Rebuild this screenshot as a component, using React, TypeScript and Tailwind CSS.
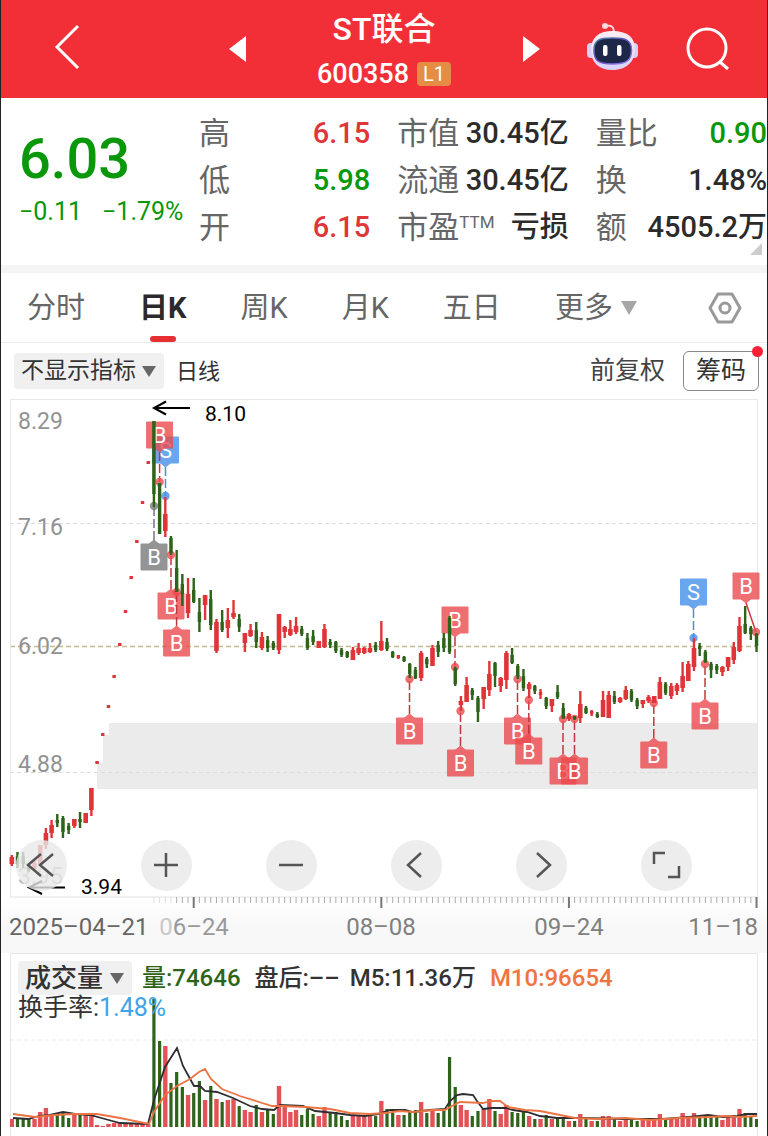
import type { ReactNode } from "react";

// [direction, high, low, body top, body bottom, volume]
type Candle = [1 | 0, number, number, number, number, number];

const CANDLES: Candle[] = [
  [1, 855, 866, 857, 864, 8], [0, 852, 868, 856, 864, 9], [0, 852, 868, 856, 864, 9], [0, 863, 872, 864, 870, 8],
  [1, 861, 871, 863, 869, 8], [1, 845, 866, 845, 864, 15], [1, 828, 849, 833, 845, 19], [1, 820, 838, 825, 833, 13],
  [0, 814, 827, 820, 823, 14], [0, 816, 838, 818, 832, 14], [0, 823, 834, 826, 830, 9], [1, 819, 828, 819, 826, 12],
  [0, 812, 828, 819, 822, 12], [1, 813, 823, 813, 823, 13], [1, 788, 816, 788, 810, 12], [1, 761, 764, 761, 764, 2],
  [1, 733, 736, 733, 736, 1], [1, 705, 708, 705, 708, 3], [1, 675, 678, 675, 678, 4], [1, 643, 646, 643, 646, 4],
  [1, 610, 613, 610, 613, 3], [1, 576, 579, 576, 579, 3], [1, 540, 543, 540, 543, 3], [1, 501, 504, 501, 504, 3],
  [1, 461, 464, 461, 464, 3], [0, 421, 507, 421, 494, 128], [0, 483, 534, 483, 534, 86], [1, 497, 537, 514, 531, 81],
  [0, 536, 555, 538, 553, 44], [0, 550, 592, 568, 592, 55], [0, 574, 606, 584, 594, 40], [1, 578, 618, 594, 613, 32],
  [0, 578, 603, 590, 602, 34], [0, 598, 632, 612, 622, 46], [1, 595, 620, 595, 605, 27], [0, 590, 630, 599, 625, 41],
  [1, 619, 653, 622, 651, 28], [0, 610, 632, 622, 630, 25], [1, 608, 638, 620, 628, 27], [1, 600, 619, 613, 617, 28],
  [0, 614, 632, 619, 627, 21], [1, 633, 652, 633, 643, 17], [1, 624, 637, 630, 636, 15], [0, 622, 648, 630, 642, 22],
  [1, 632, 650, 637, 648, 15], [0, 636, 652, 640, 648, 17], [0, 641, 650, 643, 648, 13], [1, 614, 654, 614, 650, 41],
  [1, 626, 638, 627, 632, 20], [1, 620, 636, 629, 635, 15], [1, 617, 634, 626, 632, 17], [0, 626, 636, 629, 634, 12],
  [0, 633, 650, 638, 648, 18], [0, 630, 645, 636, 642, 13], [1, 641, 648, 641, 648, 11], [1, 624, 648, 629, 647, 20],
  [0, 639, 648, 642, 645, 15], [0, 641, 653, 642, 651, 15], [0, 648, 657, 650, 655, 11], [0, 651, 658, 652, 657, 7],
  [1, 647, 660, 650, 660, 12], [1, 643, 655, 648, 653, 12], [1, 647, 654, 648, 653, 12], [1, 643, 653, 648, 652, 11],
  [0, 642, 652, 645, 650, 11], [1, 621, 651, 641, 650, 26], [0, 638, 651, 642, 649, 18], [0, 651, 658, 652, 657, 14],
  [1, 655, 659, 655, 658, 12], [0, 656, 662, 657, 661, 12], [0, 663, 678, 664, 674, 15], [0, 667, 679, 670, 678, 17],
  [1, 651, 681, 653, 678, 25], [0, 657, 668, 659, 664, 14], [1, 645, 666, 648, 666, 18], [0, 641, 657, 645, 652, 14],
  [0, 633, 652, 638, 648, 18], [0, 616, 654, 618, 652, 70], [0, 667, 686, 668, 684, 40], [1, 696, 711, 701, 705, 22],
  [1, 677, 702, 685, 702, 17], [0, 688, 700, 690, 695, 11], [0, 696, 722, 698, 712, 16], [1, 687, 709, 687, 699, 18],
  [1, 661, 696, 674, 690, 28], [0, 662, 687, 663, 676, 16], [1, 677, 692, 678, 686, 13], [1, 651, 689, 653, 680, 22],
  [0, 648, 664, 655, 663, 15], [0, 664, 679, 666, 676, 14], [0, 669, 691, 676, 688, 15], [1, 682, 698, 684, 689, 11],
  [0, 685, 694, 686, 691, 8], [1, 689, 699, 692, 695, 8], [0, 697, 709, 698, 706, 12], [1, 699, 712, 699, 706, 8],
  [0, 685, 699, 692, 697, 10], [0, 703, 719, 708, 718, 9], [1, 713, 721, 714, 719, 6], [0, 716, 720, 716, 719, 6],
  [1, 691, 723, 704, 718, 13], [0, 706, 714, 708, 713, 8], [1, 710, 716, 711, 714, 6], [0, 712, 718, 714, 717, 6],
  [1, 691, 717, 700, 717, 11], [1, 691, 718, 695, 718, 11], [0, 691, 704, 696, 702, 8], [1, 697, 703, 698, 702, 6],
  [1, 686, 700, 690, 699, 9], [0, 689, 702, 691, 700, 8], [0, 698, 709, 700, 706, 6], [1, 700, 708, 700, 704, 7],
  [1, 695, 703, 697, 701, 7], [1, 696, 703, 696, 703, 7], [1, 677, 699, 682, 699, 13], [0, 682, 695, 684, 693, 8],
  [1, 683, 699, 686, 696, 8], [1, 683, 695, 685, 691, 8], [1, 662, 692, 676, 688, 14], [1, 661, 681, 664, 681, 11],
  [1, 638, 671, 648, 667, 14], [0, 643, 656, 646, 649, 11], [0, 650, 663, 652, 662, 11], [0, 662, 678, 664, 670, 11],
  [0, 664, 674, 666, 670, 10], [1, 666, 676, 667, 672, 7], [1, 657, 671, 657, 667, 10], [1, 642, 664, 647, 660, 12],
  [1, 617, 652, 626, 651, 18], [0, 606, 634, 624, 633, 14], [0, 626, 640, 628, 634, 10], [0, 633, 652, 634, 646, 8],
];

const STEP = 5.685;
const cx = (i: number) => 11.8 + i * STEP;
const UP = "#e03538";
const DOWN = "#2d641a";

type Marker = {
  label: string;
  x: number;
  y: number;
  dotX: number;
  dotY: number;
  color: string;
  line: string;
  solid?: boolean;
};

const buy = (x: number, y: number, dotY: number): Marker => ({
  label: "B", x, y, dotX: x, dotY, color: "#ec4a4e", line: "#c0383f",
});

const MARKERS: Marker[] = [
  { label: "S", x: 165.5, y: 450, dotX: 165.5, dotY: 496, color: "#4490ea", line: "#4b8fd8" },
  buy(159.6, 435, 482),
  { label: "B", x: 154, y: 557, dotX: 154, dotY: 506, color: "#7a7a7a", line: "#777777" },
  buy(171, 606, 555),
  buy(176.6, 643, 592),
  buy(409.5, 731, 679),
  buy(455, 620, 667),
  buy(460.5, 763, 711),
  buy(517.5, 731, 679),
  buy(528.8, 751, 700),
  buy(563, 771, 719),
  buy(574.5, 771, 719),
  buy(653.8, 755, 703),
  buy(705, 716, 664),
  { label: "S", x: 693.5, y: 592, dotX: 693.5, dotY: 638, color: "#4490ea", line: "#4b8fd8" },
  { label: "B", x: 746, y: 586, dotX: 756, dotY: 632, color: "#ec4a4e", line: "#d0383f", solid: true },
];

const M5 =
  "13,1118 28,1119 40,1116 50,1115 63,1112 75,1114 90,1115 105,1119 120,1123 148,1124 154,1100 165,1067 177,1048 183,1066 194,1086 200,1086 205,1091 217,1092 233,1098 250,1106 262,1109 274,1110 280,1105 303,1106 315,1111 335,1113 350,1115 365,1116 378,1114 390,1110 405,1110 413,1112 430,1110 445,1109 450,1101 457,1095 463,1094 473,1095 477,1101 483,1109 492,1108 506,1108 513,1110 527,1112 540,1116 557,1118 580,1118 627,1119 663,1119 690,1117 708,1115 723,1117 737,1116 747,1114 757,1114";
const M10 =
  "13,1114 35,1117 55,1115 75,1114 97,1114 120,1118 149,1124 154,1112 165,1095 177,1086 190,1079 199,1072 205,1069 211,1079 222,1089 240,1096 272,1106 282,1106 305,1107 330,1109 350,1113 370,1114 385,1113 400,1111 413,1112 433,1110 445,1110 452,1106 460,1102 483,1103 491,1101 500,1101 508,1107 525,1110 540,1111 555,1114 575,1118 600,1119 625,1118 650,1120 680,1118 710,1117 725,1116 740,1117 757,1116";

const STATS = [
  [
    { label: "高", value: "6.15", cls: "text-[#e0363a]" },
    { label: "低", value: "5.98", cls: "text-[#0a970a]" },
    { label: "开", value: "6.15", cls: "text-[#e0363a]" },
  ],
  [
    { label: "市值", value: "30.45亿", cls: "text-[#2b2b2b]" },
    { label: "流通", value: "30.45亿", cls: "text-[#2b2b2b]" },
    { label: "市盈", sup: "TTM", value: "亏损", cls: "text-[#2b2b2b]" },
  ],
  [
    { label: "量比", value: "0.90", cls: "text-[#0a970a]" },
    { label: "换", value: "1.48%", cls: "text-[#2b2b2b]" },
    { label: "额", value: "4505.2万", cls: "text-[#2b2b2b]" },
  ],
];

const TABS = ["分时", "日K", "周K", "月K", "五日"];

function Robot() {
  return (
    <svg viewBox="0 0 52 50" className="h-[50px] w-[52px]">
      <defs>
        <linearGradient id="shell" x1="0" y1="0" x2="0" y2="1">
          <stop offset="0" stopColor="#fdeef4" />
          <stop offset="1" stopColor="#d9d2fb" />
        </linearGradient>
        <linearGradient id="rim" x1="0" y1="0" x2="1" y2="1">
          <stop offset="0" stopColor="#3f7f9c" />
          <stop offset="0.5" stopColor="#6a4fc4" />
          <stop offset="1" stopColor="#8d86f0" />
        </linearGradient>
      </defs>
      <path d="M19 4c6-1 8 1 8 7" fill="none" stroke="#f7d3d8" strokeWidth="2" />
      <circle cx="18" cy="4" r="3" fill="#fbd9de" />
      <rect x="0" y="21" width="8" height="15" rx="4" fill="#d8d0f5" />
      <rect x="43" y="21" width="8" height="15" rx="4" fill="#d8d0f5" />
      <path d="M25.500 9C40 9 48 15 48 27S40 48 25.500 48 4 40 4 28 11 9 25.500 9z" fill="url(#shell)" />
      <path
        d="M25.500 16C39 16 44.500 18 44.500 28.500S39 42 25.500 42 7 39 7 28.500 12 16 25.500 16z"
        fill="#1d2747"
        stroke="url(#rim)"
        strokeWidth="1.5"
      />
      <rect x="16" y="23" width="4.500" height="11" rx="2" fill="#fff" />
      <rect x="30" y="23" width="4.500" height="11" rx="2" fill="#fff" />
    </svg>
  );
}

function Header() {
  return (
    <header className="grid h-[98px] grid-cols-[1fr_277px_1fr] items-center bg-[#f22f37] text-white">
      <div className="flex items-center justify-between pl-[53px]">
        <button aria-label="返回" className="-mt-1">
          <svg viewBox="0 0 26 46" className="h-[46px] w-[26px]" fill="none" stroke="currentColor" strokeWidth="3">
            <path d="M24 2 3 23l21 21" />
          </svg>
        </button>
        <button aria-label="上一只">
          <svg viewBox="0 0 17 26" className="h-[26px] w-[17px]" fill="currentColor">
            <path d="M17 0v26L0 13z" />
          </svg>
        </button>
      </div>
      <div className="flex flex-col items-center gap-2">
        <h1 className="text-[32px] leading-[42px] font-medium">ST联合</h1>
        <div className="flex items-center gap-2 text-[27px] leading-8 font-medium">
          600358
          <span className="rounded-sm bg-[#e58d45] px-[6px] text-[20px] leading-6 font-normal">L1</span>
        </div>
      </div>
      <div className="flex items-center justify-between pr-[37px]">
        <button aria-label="下一只">
          <svg viewBox="0 0 17 26" className="h-[26px] w-[17px]" fill="currentColor">
            <path d="M0 0v26l17-13z" />
          </svg>
        </button>
        <button aria-label="助手" className="-mt-1">
          <Robot />
        </button>
        <button aria-label="搜索">
          <svg viewBox="0 0 44 44" className="size-11" fill="none" stroke="currentColor" strokeWidth="3">
            <circle cx="21" cy="21" r="19" />
            <path d="m34 35 8 7" />
          </svg>
        </button>
      </div>
    </header>
  );
}

function Quote() {
  return (
    <section className="relative grid grid-cols-[171px_1fr_1fr_1fr] gap-x-[27px] border-b-8 border-[#f4f4f4] pt-3 pb-[14px]">
      <div className="pl-[18px] text-[#0a970a]">
        <div className="pt-[18px] text-[56px] leading-[62px] font-medium">6.03</div>
        <div className="flex gap-5 pt-1 text-[25px] leading-9 whitespace-nowrap">
          <span>−0.11</span>
          <span>−1.79%</span>
        </div>
      </div>
      {STATS.map((col, i) => (
        <dl key={i} className="text-[31px] leading-[47px]">
          {col.map((s) => (
            <div key={s.label} className="flex justify-between whitespace-nowrap">
              <dt className="flex text-[#666]">
                {s.label}
                {"sup" in s && <span className="text-[17px] leading-9">{s.sup}</span>}
              </dt>
              <dd className={`text-[29px] font-medium ${s.cls}`}>{s.value}</dd>
            </div>
          ))}
        </dl>
      ))}
      <svg viewBox="0 0 12 12" className="absolute right-[5px] bottom-[10px] size-3" fill="#ccc">
        <path d="M12 0v12H0z" />
      </svg>
    </section>
  );
}

function Tabs() {
  return (
    <nav className="flex h-[70px] items-center border-b border-[#ececec] pr-[25px] pl-[26px] text-[29px] leading-[70px] text-[#666]">
      <div className="flex gap-[54px]">
        {TABS.map((t) =>
          t === "日K" ? (
            <button key={t} className="relative font-bold text-[#2a2a2a]">
              {t}
              <span className="absolute bottom-[1px] left-1/2 h-[6px] w-[26px] -translate-x-1/2 rounded-full bg-[#e62e33]" />
            </button>
          ) : (
            <button key={t}>{t}</button>
          ),
        )}
        <button className="flex items-center gap-2">
          更多
          <svg viewBox="0 0 16 14" className="h-[14px] w-4" fill="#a6a6a6">
            <path d="M0 0h16L8 14z" />
          </svg>
        </button>
      </div>
      <button aria-label="设置" className="ml-auto">
        <svg viewBox="0 0 34 32" className="h-8 w-[34px]" fill="none" stroke="#999" strokeWidth="3" strokeLinejoin="round">
          <path d="M10 2h14l8 14-8 14H10L2 16z" />
          <circle cx="17" cy="16" r="5" />
        </svg>
      </button>
    </nav>
  );
}

function Dropdown({ label, children, className }: { label: string; children: ReactNode; className: string }) {
  return (
    <div className={`flex items-center rounded bg-[#f0f0f0] pr-2 text-[#333] ${className}`}>
      <select aria-label={label} className="appearance-none bg-transparent pl-[7px] outline-none">
        {children}
      </select>
      <svg viewBox="0 0 14 11" className="ml-[6px] h-[11px] w-[14px]" fill="#666">
        <path d="M0 0h14L7 11z" />
      </svg>
    </div>
  );
}

function IndicatorBar() {
  return (
    <div className="flex h-14 items-center pr-2 pl-[13px] text-[#333]">
      <Dropdown label="指标" className="h-9 text-[23px]">
        <option>不显示指标</option>
      </Dropdown>
      <span className="ml-3 text-[22px]">日线</span>
      <button className="ml-auto text-[25px] text-[#444]">前复权</button>
      <button className="relative ml-[18px] h-10 rounded-md border border-[#888] px-3 text-[25px] leading-9">
        筹码
        <span className="absolute -top-[6px] -right-[5px] size-[11px] rounded-full bg-[#fa2038]" />
      </button>
    </div>
  );
}

function MarkerTag({ m }: { m: Marker }) {
  const dir = m.dotY > m.y ? 1 : -1;
  const edge = m.y + dir * 13;
  return (
    <g>
      <line
        x1={m.x}
        y1={edge + dir * 4}
        x2={m.dotX}
        y2={m.dotY}
        stroke={m.line}
        strokeWidth="1.5"
        strokeDasharray={m.solid ? undefined : "9 3"}
      />
      <circle cx={m.dotX} cy={m.dotY} r="4.2" fill={m.color} opacity="0.8" />
      <path
        d={`M${m.x - 13} ${m.y - 13}h26v26h-26zM${m.x - 5} ${edge}h10l-5 ${dir * 4}z`}
        fill={m.color}
        stroke={m.color}
        strokeLinejoin="round"
        opacity="0.8"
      />
      <text x={m.x} y={m.y + 8} textAnchor="middle" fontSize="22" fill="#fff">
        {m.label}
      </text>
    </g>
  );
}

function PriceChart() {
  return (
    <svg viewBox="10 399 748 554" className="block h-auto w-full overflow-visible" fill="none">
      <rect x="10" y="399" width="748" height="498" fill="#fff" />
      <path d="M97 789V763h6v-28h6v-12h649v66z" fill="#ebebeb" />
      <path d="M10 523.5h748M10 772.5h748" stroke="#dcdcdc" strokeDasharray="4 3" />
      <path d="M10 646.5h748" stroke="#c3b98f" strokeWidth="1.3" strokeDasharray="5 3" />
      <path d="M10.5 897V399.5h747V897" stroke="#e8e8e8" />
      <path d="M10 897h748" stroke="#e2e2e2" />

      <g fontSize="23" fill="#929292">
        <text x="18" y="429">8.29</text>
        <text x="18" y="535">7.16</text>
        <text x="18" y="654">6.02</text>
        <text x="18" y="772">4.88</text>
        <text x="18" y="884" fill="#b5b5b5">3.95</text>
      </g>

      {MARKERS.map((m, i) => (
        <MarkerTag key={i} m={m} />
      ))}

      {CANDLES.map(([up, high, low, top, bottom], i) => {
        const half = !up || bottom - top < 4 ? 1.7 : 2.3;
        return (
          <g key={i} fill={up ? UP : DOWN}>
            <rect x={cx(i) - 1.2} y={high} width="2.4" height={low - high} />
            <rect x={cx(i) - half} y={top} width={half * 2} height={bottom - top} />
          </g>
        );
      })}

      <g stroke="#000" strokeWidth="2">
        <path d="M166 401.500l-12 6.500 12 6.500M154 408h36" />
        <path d="M42 881l-13 6.500 13 6.500M29 887.500h36" />
      </g>
      <g fontSize="21" fill="#000">
        <text x="205" y="421">8.10</text>
        <text x="81" y="894">3.94</text>
      </g>

      {CANDLES.map((_, i) =>
        i < 25 ? null : (i - 32) % 33 === 0 ? (
          <path key={i} d={`M${cx(i)} 897v11`} stroke="#777" strokeWidth="2" />
        ) : (
          <path key={i} d={`M${cx(i)} 897v6`} stroke={i < 29 ? "#ddd" : "#aaa"} />
        ),
      )}
      <g fontSize="24" fill="#808080">
        <text x="9" y="935" fill="#666">2025–04–21</text>
        <text x="194" y="935" textAnchor="middle" fill="#999">
          <tspan fill="#c8c8c8">0</tspan>6–24
        </text>
        <text x="381" y="935" textAnchor="middle">08–08</text>
        <text x="569" y="935" textAnchor="middle">09–24</text>
        <text x="758" y="935" textAnchor="end">11–18</text>
      </g>
    </svg>
  );
}

const CONTROLS = [
  { label: "更早", d: "M25 14 12 25l13 11M37 14 24 25l13 11" },
  { label: "放大", d: "M25 13v24M13 25h24" },
  { label: "缩小", d: "M13 25h24" },
  { label: "左移", d: "M30 13 17 25l13 12" },
  { label: "右移", d: "M21 13l13 12-13 12" },
  { label: "全屏", d: "M13 24V13h11M38 26v11H27" },
];

function ChartPanel() {
  return (
    <div className="relative bg-gradient-to-b from-white from-90% to-[#f8f8f9] to-95% px-[9px]">
      <PriceChart />
      <div className="absolute bottom-[62px] left-[15px] flex gap-[74px]">
        {CONTROLS.map((c) => (
          <button key={c.label} aria-label={c.label} className="rounded-full bg-[#e8e8e8]/80">
            <svg viewBox="0 0 51 51" className="size-[51px]" fill="none" stroke="#555" strokeWidth="2.5">
              <path d={c.d} />
            </svg>
          </button>
        ))}
      </div>
    </div>
  );
}

function VolumePanel() {
  return (
    <div className="relative px-[9px]">
      <svg viewBox="10 953 748 183" className="block h-auto w-full" fill="none">
        <path d="M10.500 1136V953.500h747V1136" stroke="#e6e6e6" />
        <path d="M10 1040h748" stroke="#e8e8ec" strokeDasharray="4 3" />
        {CANDLES.map(([up, , , , , vol], i) => (
          <rect
            key={i}
            x={cx(i) - (up ? 2.2 : 1.6)}
            y={1127 - vol}
            width={up ? 4.4 : 3.2}
            height={vol}
            fill={up ? "#e35256" : DOWN}
          />
        ))}
        <polyline points={M5} stroke="#2e2e32" strokeWidth="1.8" />
        <polyline points={M10} stroke="#ec7442" strokeWidth="1.8" />
      </svg>
      <div className="absolute top-2 left-[17px] leading-[26px] font-medium whitespace-nowrap text-[#333]">
        <div className="flex items-center text-[24px]">
          <Dropdown label="副图指标" className="h-[34px] text-[26px]">
            <option>成交量</option>
          </Dropdown>
          <span className="ml-[10px] text-[#2d641a]">量:74646</span>
          <span className="ml-[14px]">盘后:––</span>
          <span className="ml-[10px]">M5:11.36万</span>
          <span className="ml-[14px] text-[#f07440]">M10:96654</span>
        </div>
        <div className="text-[25px] font-normal">
          换手率:<span className="text-[#3fa4e8]">1.48%</span>
        </div>
      </div>
    </div>
  );
}

export default function App() {
  return (
    <main className="w-full overflow-hidden border-x border-[#222] bg-white font-['Roboto','Noto_Sans_CJK_SC',sans-serif]">
      <Header />
      <Quote />
      <Tabs />
      <IndicatorBar />
      <ChartPanel />
      <VolumePanel />
    </main>
  );
}
